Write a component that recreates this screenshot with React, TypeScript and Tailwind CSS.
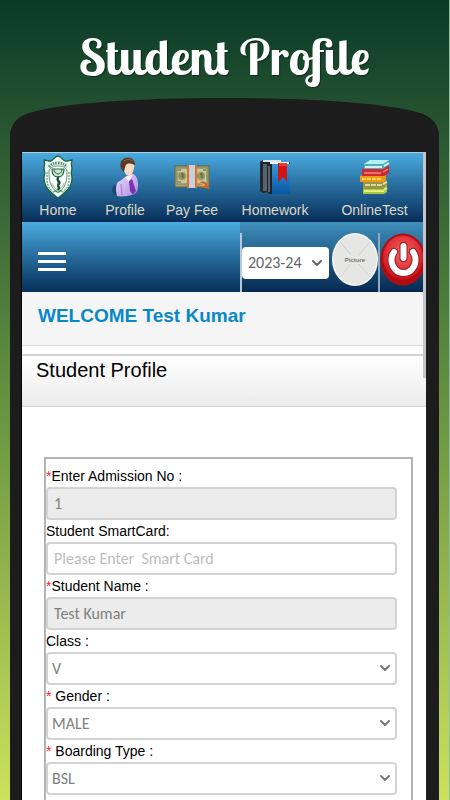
import type { ReactNode } from 'react';
import { ChevronDown } from 'lucide-react';

function CrestIcon() {
  return (
    <svg viewBox="0 0 32 44" className="h-11 w-8">
      <path
        d="M16 1c3 0 4 4 7 5 2 1 4-1 7-1-1 3-1 5 0 8-1 3-1 6 0 10 0 9-6 14-14 20C8 37 2 32 2 23c1-4 1-7 0-10 1-3 1-5 0-8 3 0 5 2 7 1 3-1 4-5 7-5Z"
        fill="#f3f9f4"
        stroke="#17683f"
        strokeWidth="1.3"
      />
      <path d="M16 11c4 0 8 1 9 5 0 10-1 16-9 22-8-6-9-12-9-22 1-4 5-5 9-5Z" fill="#fff" stroke="#5c9c78" />
      <path d="M7 12c3-3 5-4 9-4s6 1 9 4" fill="none" stroke="#4f9170" strokeWidth="3" strokeDasharray="1.500 1" />
      <path d="M5 17v8c0 6 3 10 8 13M27 17v8c0 6-3 10-8 13" fill="none" stroke="#86b898" strokeWidth="1.6" strokeDasharray="2 1" />
      <path d="M10 14h12c0 5-2 8-6 8s-6-3-6-8Z" fill="#cfe5d5" stroke="#246b43" strokeWidth="1.2" />
      <path d="M12 14c0 3 2 5 4 5s4-2 4-5" fill="none" stroke="#246b43" />
      <path d="M16 21v14M12 36h8" stroke="#246b43" strokeWidth="1.2" />
      <path d="M17 22c-5 3 3 4 0 7s3 3-1 6" fill="none" stroke="#0c4b2b" strokeWidth="2" />
      <path d="M10 28c1 3 3 6 6 8 3-2 5-5 6-8" fill="none" stroke="#86b898" />
    </svg>
  );
}

function PersonIcon() {
  return (
    <svg viewBox="0 0 30 42" className="h-[42px] w-[30px]">
      <defs>
        <linearGradient id="shirt" x1="0" x2="1" y2="1">
          <stop stopColor="#eadcff" />
          <stop offset="1" stopColor="#b08ae0" />
        </linearGradient>
      </defs>
      <ellipse cx="8" cy="34" rx="6" ry="6" fill="#123f66" opacity=".7" />
      <path d="M7 40c-2-8-1-14 3-15l5-4 8-3c4 2 5 6 5 11 0 6-2 9-6 10-5 1-10 2-15 1Z" fill="url(#shirt)" />
      <path d="M15 21l4 5 4-8" fill="#f7efff" />
      <path d="M19 25l3-2 4 12-3 4-3-4z" fill="#7b35ac" />
      <path d="M11 28l1 11" stroke="#9978c4" />
      <path d="M13 9c0-4 3-6 6-6 4 0 6 4 5 9-1 5-3 8-5 8-3 0-6-5-6-11Z" fill="#f7d9c4" />
      <path d="M12 14c-3-4-2-10 3-12 5-2 10 1 10 7-3-1-5-2-8-1-2 1-2 4-3 8Z" fill="#5a3823" />
      <path d="M14 5c3-2 6-2 9 0" stroke="#9a7049" fill="none" />
    </svg>
  );
}

function MoneyIcon() {
  return (
    <svg viewBox="0 0 36 24" className="h-6 w-9">
      <rect x="1" y="1" width="34" height="21" fill="#a8a878" stroke="#5d6542" />
      <rect x="3" y="3" width="30" height="16" fill="#c9c697" stroke="#808353" />
      <circle cx="8" cy="11" r="4" fill="#8f9463" />
      <circle cx="27" cy="11" r="4" fill="#8f9463" />
      <path d="M4 5h3M4 17h3M29 5h3M7 9h2v4M26 9h2v4" stroke="#4f5938" fill="none" />
      <rect x="13" width="10" height="23" fill="#e66a28" />
      <rect x="15" width="6" height="23" fill="#c2d0df" />
      <path d="M26 17c3-2 6 0 7 2l3 5-5-1c-3 0-4-1-5-2Z" fill="#c46a2c" />
      <path d="M26 18l5 2M26 20l4 1" stroke="#f0b37c" />
    </svg>
  );
}

function BooksIcon() {
  return (
    <svg viewBox="0 0 32 36" className="h-9 w-8">
      <defs>
        <linearGradient id="cover" x1="0" y1="0" x2="0" y2="1">
          <stop stopColor="#3a96d8" />
          <stop offset="1" stopColor="#0756a3" />
        </linearGradient>
      </defs>
      <path d="M1 3l3-2h18v30l-18 3-3-2Z" fill="#23282f" />
      <path d="M4 1h18v2H4z" fill="#dbe5ec" />
      <path d="M4 5h4v27H4z" fill="#59636d" />
      <path d="M8 5l3-2h20v32H11l-3-2Z" fill="#1c2229" />
      <path d="M11 3h19v2H11z" fill="#f0f4f6" />
      <path d="M13 5h18v30H13z" fill="url(#cover)" />
      <path d="M10 7v26" stroke="#59636c" strokeWidth="2" />
      <path d="M19 4h9v19l-4-5-5 5Z" fill="#d31212" />
      <path d="M20 4h8v3h-8z" fill="#ed3b31" />
    </svg>
  );
}

function BookStackIcon() {
  return (
    <svg viewBox="0 0 32 36" className="h-9 w-8">
      <path d="M4 28l5-2h19v7l-3 2H4Z" fill="#a9c93c" />
      <path d="M5 32h20M25 31l3-2" stroke="#e4f07a" strokeWidth="2" />
      <path d="M4 23l5-2h19v5l-4 4H4Z" fill="#98954b" />
      <path d="M6 26h17M24 25l4-2" stroke="#ddd798" strokeWidth="2" strokeDasharray="5 1" />
      <path d="M1 17l4-2h22v6l-3 2H1Z" fill="#ea9c18" />
      <path d="M3 20h20" stroke="#ffcf5c" strokeWidth="2" strokeDasharray="4 1" />
      <path d="M3 10l6-3h21v7l-5 3H3Z" fill="#cd2932" />
      <path d="M5 14h17M24 13l5-3" stroke="#ee8b80" strokeWidth="1.4" />
      <path d="M5 5l6-4h19v5l-6 4H5Z" fill="#52aebc" />
      <path d="M5 5l6-4h19l-6 4Z" fill="#b5f1ef" />
      <path d="M6 8h17M25 7l5-3" stroke="#d5f1ef" strokeWidth="2" />
    </svg>
  );
}

function PowerIcon() {
  return (
    <svg viewBox="0 0 46 53" preserveAspectRatio="none" className="h-[53px] w-[46px]">
      <defs>
        <radialGradient id="power" cx=".5" cy=".4" r=".6">
          <stop stopColor="#f06a6a" />
          <stop offset=".65" stopColor="#e03238" />
          <stop offset="1" stopColor="#c81218" />
        </radialGradient>
      </defs>
      <ellipse cx="23" cy="26.5" rx="22.500" ry="26" fill="#b20c12" />
      <ellipse cx="23" cy="24.500" rx="20" ry="22" fill="url(#power)" />
      <path d="M14 19a12 13 0 1 0 19 0M23.500 13v12" fill="none" stroke="#9d1519" strokeWidth="8" strokeLinecap="round" />
      <path d="M14 19a12 13 0 1 0 19 0M23.500 13v12" fill="none" stroke="#fff" strokeWidth="6" strokeLinecap="round" />
    </svg>
  );
}

const NAV: { label: string; icon: ReactNode }[] = [
  { label: 'Home', icon: <CrestIcon /> },
  { label: 'Profile', icon: <PersonIcon /> },
  { label: 'Pay Fee', icon: <MoneyIcon /> },
  { label: 'Homework', icon: <BooksIcon /> },
  { label: 'OnlineTest', icon: <BookStackIcon /> },
];

type FieldDef = {
  id: string;
  label: string;
  required?: boolean;
  value?: string;
  placeholder?: string;
  options?: string[];
};

const FIELDS: FieldDef[] = [
  { id: 'admission', label: 'Enter Admission No :', required: true, value: '1' },
  { id: 'smartcard', label: 'Student SmartCard:', placeholder: 'Please Enter  Smart Card' },
  { id: 'name', label: 'Student Name :', required: true, value: 'Test Kumar' },
  { id: 'class', label: 'Class :', options: ['V'] },
  { id: 'gender', label: ' Gender :', required: true, options: ['MALE', 'FEMALE'] },
  { id: 'boarding', label: ' Boarding Type :', required: true, options: ['BSL'] },
];

const CONTROL =
  "block h-[33px] w-full rounded border-2 border-[#d3d3d3] font-['Carlito','Open_Sans',sans-serif] text-base text-[#808080] outline-none";

function Field({ field }: { field: FieldDef }) {
  return (
    <div>
      <label htmlFor={field.id} className="block h-[22px] whitespace-pre text-sm leading-[22px] text-black">
        {field.required && <span className="text-[#ff1a1a]">*</span>}
        {field.label}
      </label>
      {field.options ? (
        <div className="relative">
          <select id={field.id} className={`${CONTROL} appearance-none bg-white px-1`}>
            {field.options.map((option) => (
              <option key={option}>{option}</option>
            ))}
          </select>
          <ChevronDown className="pointer-events-none absolute top-2 right-1 size-4 text-[#777]" strokeWidth={3} />
        </div>
      ) : (
        <input
          id={field.id}
          type="text"
          defaultValue={field.value}
          placeholder={field.placeholder}
          disabled={field.value !== undefined}
          className={`${CONTROL} bg-white px-1.5 placeholder:text-[#bdbdbd] disabled:bg-[#ececec]`}
        />
      )}
    </div>
  );
}

export default function App() {
  return (
    <div className="flex h-screen flex-col overflow-hidden border-r border-[#8fbc9b] bg-linear-to-b from-[#083a28] via-[#5b8a3e] to-[#cde25c] pr-[10px] pl-[10px] font-['Liberation_Sans',Arial,sans-serif] [--tw-gradient-via-position:45%]">
      <h1 className="flex h-[98px] shrink-0 items-center justify-center pt-4 font-['Lobster_Two','Liberation_Serif',serif] text-[50px] leading-none font-bold whitespace-nowrap text-white text-shadow-[1px_1px_1px_#0006]">
        Student Profile
      </h1>

      <svg viewBox="0 0 430 54" preserveAspectRatio="none" className="block h-[54px] w-full shrink-0">
        <path d="M0 54V38C0 28 6 20 16 16C44 6 120 0 215 0S386 6 414 16C424 20 430 28 430 38V54Z" fill="#1c1c1c" />
      </svg>

      <div className="flex min-h-0 grow bg-[#1c1c1c] pr-[13px] pl-[11px]">
        <div className="relative min-w-0 grow overflow-hidden border-l border-black bg-white">
          <nav className="grid h-[70px] grid-cols-[72fr_62fr_72fr_94fr_101fr] border-t border-b border-t-[#a9cfe4] border-b-[#0a2d55] bg-linear-to-b from-[#4babdf] to-[#08305c] pr-[3px]">
            {NAV.map(({ label, icon }) => (
              <a key={label} href="#" className="flex flex-col items-center text-sm leading-[18px] text-[#ded9c4] last:pl-1">
                <span className="flex h-12 items-center">{icon}</span>
                {label}
              </a>
            ))}
          </nav>

          <header className="flex h-[70px] bg-linear-to-b from-[#4babdf] to-[#08305c] pr-[3px]">
            <div className="flex grow items-center pt-2 pl-4">
              <button type="button" aria-label="Menu" className="flex w-7 flex-col gap-[5px]">
                <span className="h-[3px] bg-white" />
                <span className="h-[3px] bg-white" />
                <span className="h-[3px] bg-white" />
              </button>
            </div>
            <div className="flex w-[183px] shrink-0 items-end overflow-hidden bg-linear-to-b from-[#4090bd] to-[#062a52]">
              <div className="flex h-[59px] items-center border-l-2 border-[#bcc9d4]">
                <div className="relative">
                  <select
                    aria-label="Session"
                    className="block h-8 w-[87px] appearance-none rounded-sm bg-white pl-1.5 font-['Carlito','Open_Sans',sans-serif] text-base text-[#666] outline-none"
                  >
                    <option>2023-24</option>
                  </select>
                  <ChevronDown className="pointer-events-none absolute top-2 right-1 size-4 text-[#666]" strokeWidth={3} />
                </div>
              </div>
              <div className="ml-[3px] flex h-[59px] items-start border-r-2 border-[#8fa9bf]">
                <svg viewBox="0 0 46 53" className="h-[53px] w-[46px]">
                  <ellipse cx="23" cy="26.5" rx="23" ry="26.5" fill="#f7f7f7" />
                  <ellipse cx="23" cy="26.5" rx="21.5" ry="25" fill="#e6e6e5" />
                  <path d="M8 9l30 35M38 9L8 44" stroke="#cfcfcf" />
                  <rect x="10" y="22" width="26" height="9" fill="#e6e6e5" />
                  <text x="23" y="29" textAnchor="middle" fontSize="6" fontWeight="bold" fill="#777">
                    Picture
                  </text>
                </svg>
              </div>
              <button type="button" aria-label="Log out" className="h-[59px] shrink-0">
                <span className="flex h-full items-start">
                  <PowerIcon />
                </span>
              </button>
            </div>
          </header>

          <div className="h-[54px] border-b border-[#dedede] bg-[#f5f5f5] pl-4 text-[19px] leading-[48px] font-bold text-[#0788c9]">
            WELCOME Test Kumar
          </div>
          <h2 className="mt-2 h-[53px] border-t-2 border-b border-t-[#d4d4d4] border-b-[#d4d4d4] bg-linear-to-b from-white to-[#ebebeb] pl-3.5 text-xl leading-7 text-black">
            Student Profile
          </h2>

          <form className="mt-[50px] mr-[13px] ml-[22px] border-2 border-[#b4b4b4] pt-1.5 pr-3.5 pb-8">
            {FIELDS.map((field) => (
              <Field key={field.id} field={field} />
            ))}
          </form>

          <div className="absolute top-0 right-0 h-[226px] w-[3px] bg-[#c4c4c8]" />
        </div>
      </div>
    </div>
  );
}
